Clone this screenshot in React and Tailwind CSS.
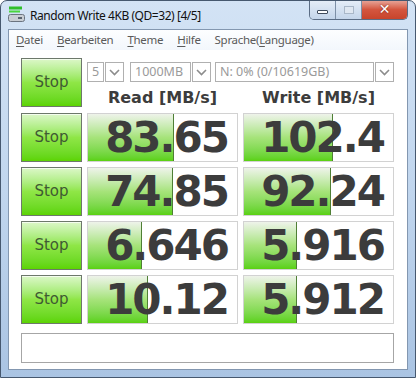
import React from 'react';

const rows = [
  { read: '83.65', write: '102.4', readBar: 86, writeBar: 89 },
  { read: '74.85', write: '92.24', readBar: 85, writeBar: 87 },
  { read: '6.646', write: '5.916', readBar: 54, writeBar: 53 },
  { read: '10.12', write: '5.912', readBar: 60, writeBar: 53 },
];

const StopButton = () => (
  <button className="h-[49px] w-[61px] border border-[#6d786b] bg-gradient-to-b from-[#dcf7c8] via-[#8fe646] to-[#5cd400] text-[15px] text-[#3f5a33] font-['DejaVu_Sans',sans-serif] shadow-[inset_0_1px_0_#f4fdee]">
    Stop
  </button>
);

const Chevron = () => (
  <svg width="11" height="7" viewBox="0 0 11 7">
    <polyline points="1,1 5.5,5.5 10,1" fill="none" stroke="#8c8c8c" strokeWidth="1.6" />
  </svg>
);

const ArrowBox = () => (
  <div className="w-[19px] h-[20px] border border-[#b0b0b0] bg-white flex items-center justify-center">
    <Chevron />
  </div>
);

const Combo = ({ text, width }) => (
  <div
    className="h-[20px] border border-[#b0b0b0] bg-white flex items-center pl-[4px] text-[12.5px] text-[#9a9a9a] font-['Noto_Sans',sans-serif] overflow-hidden whitespace-nowrap"
    style={{ width }}
  >
    {text}
  </div>
);

const Cell = ({ value, bar }) => (
  <div className="relative h-[49px] border border-[#d2d2d2] bg-white overflow-hidden flex items-center justify-end pr-[9px]">
    <div
      className="absolute left-0 top-0 bottom-0 bg-gradient-to-b from-[#eef3ea] via-[#a6e37a] to-[#5ad10e] border-r border-[#4f7f35]"
      style={{ width: bar }}
    />
    <span className="relative text-[42px] leading-none font-bold tracking-[-2px] text-[#3c3c3c] font-['DejaVu_Sans',sans-serif]">
      {value}
    </span>
  </div>
);

const AppIcon = () => (
  <svg width="18" height="17" viewBox="0 0 18 17">
    <rect x="1" y="0.5" width="13" height="3" fill="#2fbf2a" />
    <rect x="1" y="4.5" width="11" height="2" fill="#49d63c" />
    <rect x="0.5" y="8.5" width="16" height="7" rx="2" fill="#c9ced4" stroke="#6b7480" />
    <rect x="10" y="11" width="4" height="2" fill="#5a6470" />
  </svg>
);

const MenuItem = ({ before, u, after }) => (
  <span className="px-[7px]">
    {before}
    <span className="underline underline-offset-2">{u}</span>
    {after}
  </span>
);

export default function App() {
  return (
    <div className="w-[416px] h-[378px] flex flex-col border border-[#46586f] rounded-t-[7px] overflow-hidden bg-gradient-to-b from-[#d3e3f5] via-[#c1d6ee] to-[#aac4e3]">
      {/* title bar */}
      <div className="h-[28px] flex items-start">
        <div className="mt-[5px] ml-[7px]">
          <AppIcon />
        </div>
        <div className="mt-[6px] ml-[4px] text-[12px] text-[#111] font-['Noto_Sans',sans-serif] tracking-[-0.45px]">
          Random Write 4KB (QD=32) [4/5]
        </div>
        <div className="ml-auto mr-[7px] -mt-[1px] flex h-[20px] border border-t-0 border-[#5b6d85] rounded-b-[5px] overflow-hidden">
          <div className="w-[26px] bg-gradient-to-b from-[#e6eef8] to-[#c4d5ea] border-r border-[#7d8fa6] flex items-center justify-center">
            <div className="w-[11px] h-[4px] mt-[5px] bg-white border border-[#3f4b5c] rounded-[1px]" />
          </div>
          <div className="w-[26px] bg-gradient-to-b from-[#e6eef8] to-[#c4d5ea] border-r border-[#7d8fa6] flex items-center justify-center">
            <div className="w-[10px] h-[8px] border border-[#a9b7c8] bg-[#dfe7f1]" />
          </div>
          <div className="w-[45px] bg-gradient-to-b from-[#e7a99e] via-[#d4563f] to-[#c8442b] flex items-center justify-center text-white text-[14px] font-bold font-['DejaVu_Sans',sans-serif] [text-shadow:0_0_2px_#6a1a10]">
            ✕
          </div>
        </div>
      </div>

      {/* client */}
      <div className="flex-1 mx-[7px] mb-[7px] border border-[#8397b0] bg-white flex flex-col">
        <div className="h-[20px] flex items-center text-[11.5px] text-[#5a5a5a] font-['Noto_Sans',sans-serif] tracking-[-0.3px] bg-gradient-to-b from-[#fdfeff] to-[#f3f7fc]">
          <MenuItem u="D" after="atei" />
          <MenuItem u="B" after="earbeiten" />
          <MenuItem u="T" after="heme" />
          <MenuItem u="H" after="ilfe" />
          <MenuItem before="Sprache(" u="L" after="anguage)" />
        </div>

        <div className="pl-[12px] pt-[8px] grid grid-cols-[61px_151px_151px] gap-[5px]">
          <StopButton />
          <div className="col-span-2 flex flex-col">
            <div className="mt-[4px] flex">
              <Combo text="5" width={17} />
              <div className="ml-[1px]"><ArrowBox /></div>
              <div className="ml-[6px]"><Combo text="1000MB" width={61} /></div>
              <div className="ml-[1px]"><ArrowBox /></div>
              <div className="ml-[4px]"><Combo text="N: 0% (0/10619GB)" width={159} /></div>
              <div className="ml-[1px]"><ArrowBox /></div>
            </div>
            <div className="mt-[6px] grid grid-cols-2 gap-[5px] text-[16px] leading-[20px] font-bold text-[#3c3c3c] font-['DejaVu_Sans',sans-serif] text-center">
              <div>Read [MB/s]</div>
              <div>Write [MB/s]</div>
            </div>
          </div>

          {rows.map((r, i) => (
            <React.Fragment key={i}>
              <StopButton />
              <Cell value={r.read} bar={r.readBar} />
              <Cell value={r.write} bar={r.writeBar} />
            </React.Fragment>
          ))}
        </div>

        <div className="ml-[12px] mt-[9px] w-[373px] h-[30px] border border-[#a6a6a6] bg-white" />
      </div>
    </div>
  );
}
